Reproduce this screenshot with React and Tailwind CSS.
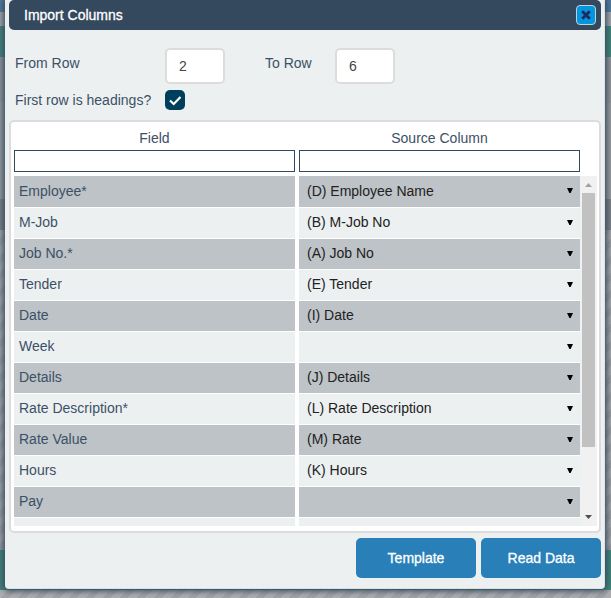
import React from "react";
import clsx from "clsx";

const rows = [
  { field: "Employee*", source: "(D) Employee Name" },
  { field: "M-Job", source: "(B) M-Job No" },
  { field: "Job No.*", source: "(A) Job No" },
  { field: "Tender", source: "(E) Tender" },
  { field: "Date", source: "(I) Date" },
  { field: "Week", source: "" },
  { field: "Details", source: "(J) Details" },
  { field: "Rate Description*", source: "(L) Rate Description" },
  { field: "Rate Value", source: "(M) Rate" },
  { field: "Hours", source: "(K) Hours" },
  { field: "Pay", source: "" },
];

const sources = ["", ...rows.map((row) => row.source).filter(Boolean)];

function Backdrop() {
  return (
    <div aria-hidden="true" className="absolute inset-0 flex flex-col bg-[#a3a4a6]">
      <div className="h-3 bg-[#527c9f]" />
      <div className="h-[14px] bg-[#a9abae]" />
      <div className="h-[31px] bg-[#3f8579]" />
      <div className="h-[46px] bg-[#94979b]" />
      <div className="h-24 bg-[#9b9da1]" />
      <div className="h-[31px] bg-[#7c8187]" />
      <div className="grow bg-[repeating-linear-gradient(135deg,#a8a8aa_0px,#a8a8aa_6px,#9c9c9f_6px,#9c9c9f_12px)]" />
      <div className="h-10 bg-[#3f8579]" />
      <div className="h-2 bg-[repeating-linear-gradient(135deg,#aeaeb0_0px,#aeaeb0_6px,#a2a2a5_6px,#a2a2a5_12px)]" />
    </div>
  );
}

function NumberBox({ id, value }) {
  return (
    <input
      id={id}
      type="text"
      defaultValue={value}
      className="h-9 w-[60px] rounded-[5px] border-2 border-[#dcdcdc] bg-white px-3 text-[#444] outline-none"
    />
  );
}

function MappingRow({ field, source, index }) {
  return (
    <tr
      className={clsx(
        "grid shrink-0 grid-cols-2 gap-1",
        index === 0 ? "h-[31px]" : "h-[30px]"
      )}
    >
      <td className={clsx("flex items-center px-[5px] pb-[2px]", index % 2 ? "bg-[#ecf0f1]" : "bg-[#bdc3c7]")}>
        {field}
      </td>
      <td className={clsx("relative flex", index % 2 ? "bg-[#ecf0f1]" : "bg-[#bdc3c7]")}>
        <select
          aria-label={"Source column for " + field}
          defaultValue={source}
          className="w-full appearance-none bg-transparent pr-6 pb-[2px] pl-2 text-[#222] outline-none"
        >
          {sources.map((option) => (
            <option key={option} value={option}>
              {option}
            </option>
          ))}
        </select>
        <svg viewBox="0 0 6 5" aria-hidden="true" className="pointer-events-none absolute top-3 right-[7px] h-[5px] w-[6px]">
          <path d="M0 0h6L3.6 5H2.4Z" fill="#000" />
        </svg>
      </td>
    </tr>
  );
}

function ScrollBar() {
  return (
    <div aria-hidden="true" className="flex w-[17px] shrink-0 flex-col items-center bg-[#f1f1f1]">
      <svg viewBox="0 0 17 17" className="h-[17px] w-[17px]">
        <path d="M5 11h7L8.5 7Z" fill="#a3a3a3" />
      </svg>
      <div className="h-[254px] w-[13px] bg-[#c1c1c1]" />
      <svg viewBox="0 0 17 17" className="mt-auto h-[17px] w-[17px]">
        <path d="M5 6h7L8.5 10Z" fill="#505050" />
      </svg>
    </div>
  );
}

export default function App() {
  return (
    <div className="relative min-h-screen overflow-hidden pb-[9px] font-['Liberation_Sans',Arial,sans-serif] text-[14px] leading-5 text-[#3c5065]">
      <Backdrop />
      <main
        role="dialog"
        aria-labelledby="dialog-title"
        className="relative mr-[6px] ml-[5px] rounded-b-[4px] border-r border-b border-[#dde1e2] bg-[#ecf0f1] pr-[3px] pb-[10px] pl-1 shadow-[0_0_6px_2px_#34495e]"
      >
        <header className="flex h-[30px] items-center justify-between rounded-[5px] bg-[#34495e] pr-[5px] pl-[15px] text-white">
          <h1 id="dialog-title" className="[-webkit-text-stroke:0.3px_white]">Import Columns</h1>
          <button
            type="button"
            aria-label="Close"
            className="flex size-5 items-center justify-center rounded-[4px] border border-[#c5d0d6] bg-[#0097e0]"
          >
            <svg viewBox="0 0 10 10" className="size-[10px]">
              <path d="M2.2 2.2L7.8 7.8M7.8 2.2L2.2 7.8" stroke="#24285c" strokeWidth="2.8" strokeLinecap="square" />
            </svg>
          </button>
        </header>

        <form className="px-[6px] pt-[18px]">
          <div className="flex">
            <label htmlFor="from-row" className="w-[150px] pt-[5px]">From Row</label>
            <NumberBox id="from-row" value="2" />
            <label htmlFor="to-row" className="ml-[40px] w-[70px] pt-[5px]">To Row</label>
            <NumberBox id="to-row" value="6" />
          </div>
          <div className="mt-[6px] flex">
            <label htmlFor="headings" className="w-[150px]">First row is headings?</label>
            <span className="relative flex size-5">
              <input
                id="headings"
                type="checkbox"
                defaultChecked
                className="peer size-5 appearance-none rounded-[5px] bg-[#003f5c]"
              />
              <svg viewBox="0 0 20 20" className="pointer-events-none absolute inset-0 hidden size-5 peer-checked:block">
                <path d="M5 10.5L8.7 14L15.5 7" fill="none" stroke="white" strokeWidth="2.2" />
              </svg>
            </span>
          </div>
        </form>

        <section className="mt-[10px] rounded-[5px] border-2 border-[#dcdcdc] bg-white pt-[6px] pb-[5px]">
          <div className="grid grid-cols-2 gap-x-1 pr-[19px] pl-[3px] text-center">
            <label htmlFor="filter-field" className="h-[22px]">Field</label>
            <label htmlFor="filter-source" className="h-[22px]">Source Column</label>
            <input id="filter-field" type="text" className="h-[22px] min-w-0 border border-[#34495e] bg-white px-1 outline-none" />
            <input id="filter-source" type="text" className="h-[22px] min-w-0 border border-[#34495e] bg-white px-1 outline-none" />
          </div>
          <div className="mt-1 flex h-[350px] overflow-hidden pr-[2px] pl-[3px]">
            <table aria-label="Column mapping" className="block grow">
              <tbody className="flex flex-col gap-px">
                {rows.map((row, index) => (
                  <MappingRow key={row.field} field={row.field} source={row.source} index={index} />
                ))}
                <tr aria-hidden="true" className="grid h-[30px] shrink-0 grid-cols-2 gap-1">
                  <td className="bg-[#ecf0f1]" />
                  <td className="bg-[#ecf0f1]" />
                </tr>
              </tbody>
            </table>
            <ScrollBar />
          </div>
        </section>

        <footer className="mt-[5px] flex justify-end gap-[5px] text-white [-webkit-text-stroke:0.3px_white]">
          <button type="button" className="h-10 w-[120px] rounded-[5px] bg-[#2980b9]">Template</button>
          <button type="button" className="h-10 w-[120px] rounded-[5px] bg-[#2980b9]">Read Data</button>
        </footer>
      </main>
    </div>
  );
}
